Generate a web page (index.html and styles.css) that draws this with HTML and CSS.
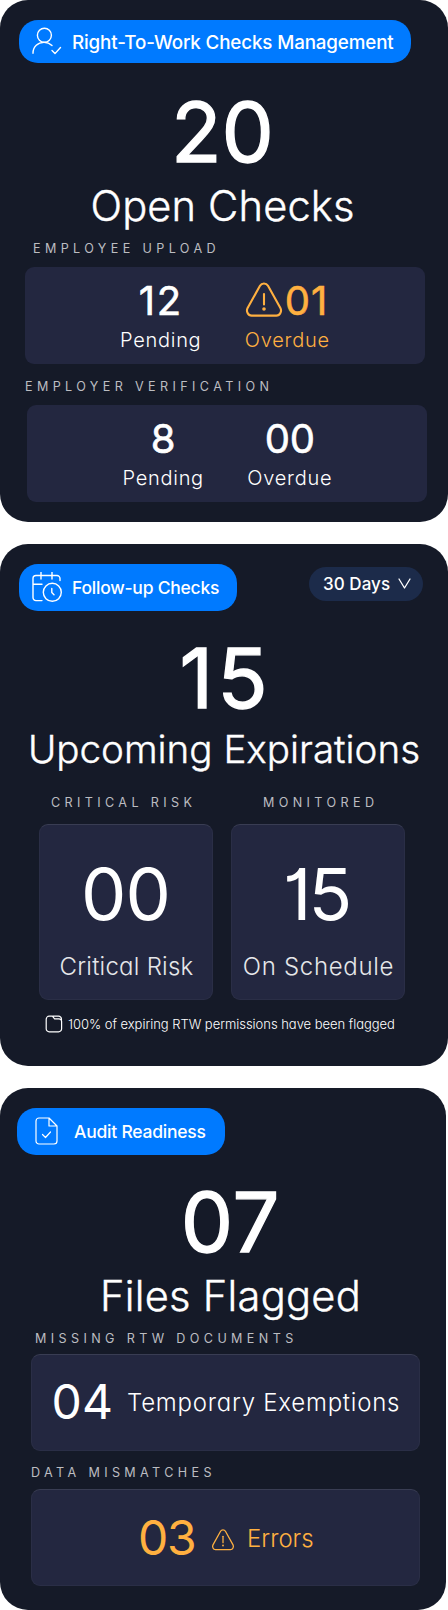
FILE: index.html
```html
<!DOCTYPE html>
<html lang="en">
<head>
<meta charset="utf-8">
<title>Right-To-Work Dashboard</title>
<link rel="stylesheet" href="styles.css">
</head>
<body>
<main class="stack">
  <section class="card card-open">
    <header class="card-head">
      <div class="pill pill-wide">
        <svg class="pill-icon" width="30" height="28" viewBox="0 0 30 28"><circle cx="12.4" cy="8.3" r="7"/><path d="M1 26.2C1 19.5 6 15.4 12 15.4c3.200 0 5.900 1.200 8 3.200M20 23.600l3 3L28.500 20.500"/></svg>
        <span>Right-To-Work Checks Management</span>
      </div>
    </header>
    <div class="hero">
      <div class="hero-num n20">20</div>
      <div class="hero-title t-open">Open Checks</div>
    </div>
    <div class="label l-upload">EMPLOYEE UPLOAD</div>
    <div class="panel p-upload">
      <div class="stat"><div class="stat-num n12">12</div><div class="stat-cap c-pending">Pending</div></div>
      <div class="stat stat-left warn">
        <div class="stat-num n01"><svg class="warn-icon" width="38" height="36" viewBox="0 0 38 36"><path d="M15 3.700c1.700-3 6.200-3 8 0L35.400 26c1.700 3.100-.4 7.600-4 7.600H6.600c-3.600 0-5.700-4.500-4-7.600z"/><path d="M19 12v10.400"/><circle class="dot" cx="19" cy="27" r="1.800"/></svg><span>01</span></div>
        <div class="stat-cap c-overdue">Overdue</div>
      </div>
    </div>
    <div class="label l-verify">EMPLOYER VERIFICATION</div>
    <div class="panel p-verify">
      <div class="stat"><div class="stat-num">8</div><div class="stat-cap c-pending">Pending</div></div>
      <div class="stat"><div class="stat-num">00</div><div class="stat-cap c-overdue">Overdue</div></div>
    </div>
  </section>

  <section class="card card-follow">
    <header class="card-head">
      <div class="pill pill-follow">
        <svg class="pill-icon" width="30" height="30" viewBox="0 0 30 30"><path d="M10 28.600H4a3 3 0 0 1-3-3V6.500a3 3 0 0 1 3-3h21a3 3 0 0 1 3 3V8.500M1 12.200h9M9 0v7M20 0v7M19.800 16.500v4l2.200 2.200"/><circle cx="20.300" cy="20.300" r="9"/></svg>
        <span>Follow-up Checks</span>
      </div>
      <div class="select"><span>30 Days</span><svg width="13" height="11" viewBox="0 0 13 11"><path d="M1 1l5.500 9L12 1"/></svg></div>
    </header>
    <div class="hero">
      <div class="hero-num n15">15</div>
      <div class="hero-title t-upcoming">Upcoming Expirations</div>
    </div>
    <div class="tiles">
      <div class="tile-col">
        <div class="label">CRITICAL RISK</div>
        <div class="panel edged tile"><div class="tile-num">00</div><div class="tile-cap c-risk">Critical Risk</div></div>
      </div>
      <div class="tile-col">
        <div class="label l-monitored">MONITORED</div>
        <div class="panel edged tile"><div class="tile-num t15">15</div><div class="tile-cap c-sched">On Schedule</div></div>
      </div>
    </div>
    <div class="note">
      <svg width="18" height="18" viewBox="0 0 18 18"><path d="M1.200 4.200a3 3 0 0 1 3-3h3.200l2.200 2.600H14a2.600 2.600 0 0 1 2.600 2.600v7.400a3 3 0 0 1-3 3H4.200a3 3 0 0 1-3-3zM8 1.200h5.200a3 3 0 0 1 3.200 3.600"/></svg>
      <span>100% of expiring RTW permissions have been flagged</span>
    </div>
  </section>

  <section class="card card-audit">
    <header class="card-head">
      <div class="pill pill-audit">
        <svg class="pill-icon" width="23" height="28" viewBox="0 0 23 28"><path d="M4 1h10l8 8v15a3 3 0 0 1-3 3H4a3 3 0 0 1-3-3V4a3 3 0 0 1 3-3zM14 1v8h8"/><path d="M7.500 17.500l3 3 5-5.500"/></svg>
        <span>Audit Readiness</span>
      </div>
    </header>
    <div class="hero">
      <div class="hero-num n07">07</div>
      <div class="hero-title t-files">Files Flagged</div>
    </div>
    <div class="label l-missing">MISSING RTW DOCUMENTS</div>
    <div class="panel edged row row-exempt"><div class="row-num n04">04</div><div class="row-cap c-exempt">Temporary Exemptions</div></div>
    <div class="label l-data">DATA MISMATCHES</div>
    <div class="panel edged row row-errors warn">
      <div class="row-num n03">03</div>
      <svg class="warn-icon small" width="24" height="22" viewBox="0 0 38 36"><path d="M15 3.700c1.700-3 6.200-3 8 0L35.400 26c1.700 3.100-.4 7.600-4 7.600H6.600c-3.600 0-5.700-4.500-4-7.600z"/><path d="M19 12v10.400"/><circle class="dot" cx="19" cy="27" r="1.500"/></svg>
      <div class="row-cap">Errors</div>
    </div>
  </section>
</main>
</body>
</html>
```
FILE: styles.css
```css
* { box-sizing: border-box; }
body { margin: 0; background: #fff; font-family: Inter, sans-serif; color: #fff; }
svg { display: block; flex: none; fill: none; stroke: currentColor; stroke-width: 1.5; stroke-linecap: round; stroke-linejoin: round; }

.stack { display: flex; flex-direction: column; gap: 22px; height: 1610px; }
.card { height: 522px; border-radius: 28px; background: #151a28; padding-top: 20px; overflow: hidden; white-space: nowrap; }
.card-audit { width: 446px; }

.card-head { display: flex; justify-content: space-between; align-items: flex-start; padding: 0 25px 0 19px; }
.card-audit .card-head { padding-left: 17px; }
.pill { display: flex; align-items: center; height: 46.500px; border-radius: 19px; background: #007aff; font-weight: 500; font-size: 17.500px; letter-spacing: -.23px; }
.pill-wide { width: 392px; height: 42.500px; padding-left: 13px; gap: 10px; font-size: 18.800px; letter-spacing: -.14px; }
.pill-wide span { padding-top: 2px; }
.pill-follow { width: 218px; padding-left: 12.500px; gap: 10.500px; }
.pill-audit { width: 208px; padding-left: 18px; gap: 16px; }
.pill-icon { stroke-width: 1.400; }
.pill-audit .pill-icon { stroke-width: 1.200; }
.select { display: flex; align-items: center; gap: 8px; width: 114px; height: 34px; margin-top: 2.500px; padding-left: 14px; border-radius: 17px; background: #1c2b4a; font-weight: 500; font-size: 17px; letter-spacing: .05px; }
.select svg { stroke-width: 1.300; }

.hero { text-align: center; padding-top: 27px; }
.card-open .hero { padding-right: 3px; }
.card-follow .hero { padding-top: 25px; }
.card-audit .hero { padding: 25px 0 0 15px; }
.hero-num { font-weight: 400; -webkit-text-stroke: 1.300px currentColor; font-size: 83px; line-height: 84px; }
.n20 { letter-spacing: 0; }
.n15 { letter-spacing: 4px; padding-left: 3px; }
.n07 { letter-spacing: 1px; }
.hero-title { margin-top: 7.500px; font-weight: 300; -webkit-text-stroke: .4px currentColor; font-size: 41.600px; line-height: 50px; }
.t-open { letter-spacing: .15px; }
.t-upcoming { margin-top: 4.500px; font-size: 38.600px; letter-spacing: 0; }
.t-files { letter-spacing: .28px; }

.label { font-weight: 400; font-size: 12.600px; line-height: 16px; letter-spacing: 4.370px; color: #bcbdc1; }
.l-upload { margin: 10.400px 0 9.600px 33px; }
.l-verify { margin: 14.400px 0 10px 25px; }
.l-missing { margin: 9.500px 0 7px 35px; }
.l-data { margin: 14px 0 8.400px 31px; }

.panel { border-radius: 9px; background: #232740; }
.edged { border: 1px solid rgba(255, 255, 255, .035); border-top-color: rgba(255, 255, 255, .1); }
.p-upload, .p-verify { display: flex; justify-content: center; gap: 43.500px; width: 400px; height: 97.500px; padding-top: 13.500px; }
.p-upload { margin-left: 25px; }
.p-verify { margin-left: 27px; padding-left: 1px; }
.stat { display: flex; flex-direction: column; align-items: center; }
.stat-left { align-items: flex-start; }
.stat-num { display: flex; font-weight: 400; -webkit-text-stroke: .600px currentColor; font-size: 40px; line-height: 41px; }
.n12 { letter-spacing: 1.700px; }
.n01 { gap: 2px; letter-spacing: .8px; }
.stat-cap { margin-top: 6.500px; font-weight: 300; font-size: 20px; line-height: 24px; font-feature-settings: "cv11"; }
.c-pending { letter-spacing: .7px; }
.c-overdue { letter-spacing: .75px; }
.warn { color: #ffb040; }
.warn-icon { stroke-width: 2.100; }
.warn-icon .dot { fill: currentColor; stroke: none; }
.n01 .warn-icon { margin-top: 2px; }

.tiles { display: flex; gap: 18px; padding: 21.100px 0 0 39px; }
.tile-col { width: 174px; }
.tile-col .label { padding-left: 12px; margin-bottom: 12.900px; }
.tile-col .l-monitored { padding-left: 32px; }
.tile { height: 176px; padding-top: 33px; text-align: center; }
.tile-num { font-size: 72px; line-height: 72px; padding-right: 1px; letter-spacing: -.9px; font-feature-settings: "cv01"; }
.t15 { letter-spacing: -3px; padding-right: 4px; }
.tile-cap { margin-top: 22px; font-weight: 300; font-size: 24px; line-height: 30px; color: #e6e7ea; font-feature-settings: "cv11"; }
.c-risk { letter-spacing: .25px; padding-left: 1px; }
.c-sched { letter-spacing: .7px; padding-left: 1px; }
.note { display: flex; gap: 5px; margin: 15px 0 0 45px; font-weight: 300; font-size: 13px; line-height: 18px; letter-spacing: -.03px; font-feature-settings: "cv11", "cv01"; }
.note svg { stroke-width: 1.200; }

.row { display: flex; align-items: flex-start; width: 389px; margin-left: 31px; height: 97px; }
.row-exempt { padding: 23px 0 0 19.500px; }
.row-errors { padding: 24px 0 0 106px; }
.row-num { font-size: 48px; line-height: 48px; }
.n04 { letter-spacing: .3px; width: 75.500px; }
.n03 { letter-spacing: -1.200px; width: 73px; }
.row-cap { margin-top: 10px; font-weight: 300; font-size: 24px; line-height: 30px; font-feature-settings: "cv11"; }
.c-exempt { letter-spacing: .76px; }
.small { margin: 15px 12px 0 0; }
```
